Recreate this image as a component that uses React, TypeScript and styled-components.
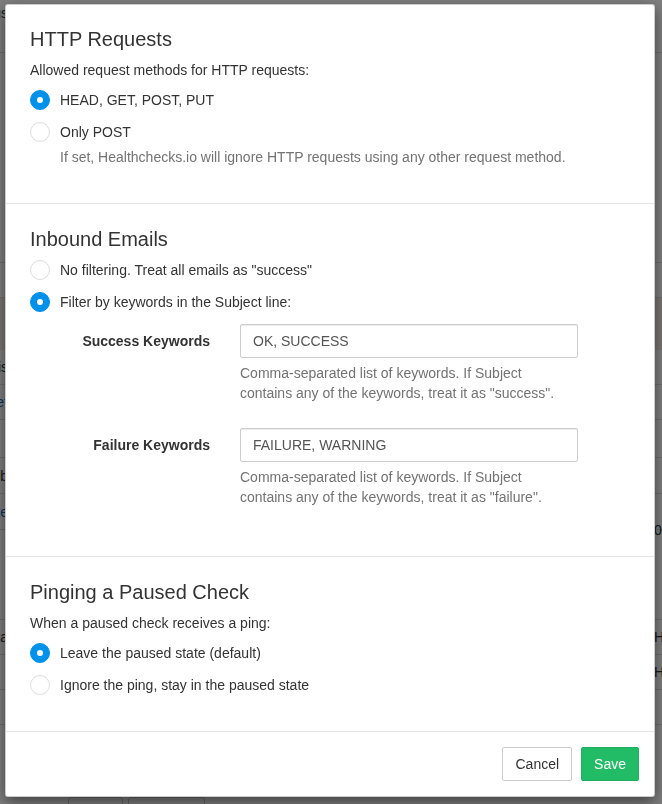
import styled, { createGlobalStyle } from "styled-components";

const GlobalStyle = createGlobalStyle`
  html, body {
    margin: 0;
    padding: 0;
  }
  body {
    font-family: "Liberation Sans", Arial, sans-serif;
    font-size: 14px;
    line-height: 20px;
    color: #333;
    background: #fff;
  }
  * {
    box-sizing: border-box;
  }
`;

/* ---------- page behind the dialog ---------- */

const _Page = styled.div`
  width: 662px;
  height: 804px;
  overflow: hidden;
  position: relative;
`;

const _BgRow = styled.div<{ $h: number; $line?: boolean; $tint?: boolean; $top?: boolean }>`
  height: ${({ $h }) => $h}px;
  display: flex;
  align-items: ${({ $top }) => ($top ? "flex-start" : "center")};
  padding-top: ${({ $top }) => ($top ? "3px" : "0")};
  justify-content: space-between;
  border-bottom: ${({ $line }) => ($line ? "1px solid #ddd" : "none")};
  background: ${({ $tint }) => ($tint ? "#f4ece8" : "transparent")};
`;

const _BgLeft = styled.div<{ $blue?: boolean }>`
  width: 8px;
  display: flex;
  justify-content: flex-end;
  white-space: nowrap;
  color: ${({ $blue }) => ($blue ? "#0a6ebd" : "#333")};
`;

const _BgRight = styled.div`
  width: 8px;
  white-space: nowrap;
  color: #333;
`;

const _BgButtons = styled.div`
  display: flex;
  gap: 5px;
  padding-left: 68px;
  align-items: flex-start;
  height: 100%;
`;

const _BgButton = styled.div<{ $w: number }>`
  width: ${({ $w }) => $w}px;
  height: 34px;
  border: 1px solid #ccc;
  border-radius: 3px;
  padding: 6px 12px;
  font-size: 14px;
`;

const _Backdrop = styled.div`
  position: fixed;
  inset: 0;
  background: rgba(0, 0, 0, 0.5);
`;

/* ---------- dialog ---------- */

const _Modal = styled.div`
  position: fixed;
  top: 4px;
  left: 5px;
  width: 650px;
  background: #fff;
  border: 1px solid rgba(0, 0, 0, 0.2);
  border-radius: 3px;
  box-shadow: 0 5px 15px rgba(0, 0, 0, 0.5);
`;

const _Section = styled.section`
  padding: 24px 24px 24px;
  border-top: 1px solid #e5e5e5;
  &:first-child {
    padding-top: 23px;
    border-top: none;
  }
`;

const _Title = styled.h2`
  margin: 0 0 10px;
  font-size: 20px;
  line-height: 22px;
  font-weight: 400;
  color: #333;
`;

const _Text = styled.p`
  margin: 0 0 10px;
`;

const _Option = styled.div`
  margin-bottom: 12px;
`;

const _OptionLine = styled.label`
  display: flex;
  align-items: center;
  gap: 10px;
  height: 20px;
  cursor: pointer;
`;

const _Radio = styled.span<{ $on: boolean }>`
  width: 20px;
  height: 20px;
  border-radius: 50%;
  flex: none;
  display: flex;
  align-items: center;
  justify-content: center;
  background: ${({ $on }) => ($on ? "#0091ea" : "#fff")};
  border: 1px solid ${({ $on }) => ($on ? "#0091ea" : "#ddd")};
  &::after {
    content: "";
    width: 6px;
    height: 6px;
    border-radius: 50%;
    background: #fff;
    display: ${({ $on }) => ($on ? "block" : "none")};
  }
`;

const _Help = styled.div<{ $indent?: boolean }>`
  margin-top: 5px;
  padding-left: ${({ $indent }) => ($indent ? "30px" : "0")};
  color: #737373;
`;

const _FormGroup = styled.div`
  display: grid;
  grid-template-columns: 180px 338px;
  column-gap: 30px;
  margin-bottom: 25px;
`;

const _Label = styled.label`
  text-align: right;
  font-weight: 700;
  padding-top: 7px;
`;

const _Input = styled.input`
  height: 34px;
  width: 100%;
  padding: 6px 12px;
  font: 14px "Liberation Sans", Arial, sans-serif;
  color: #555;
  border: 1px solid #ccc;
  border-radius: 2px;
  box-shadow: inset 0 1px 1px rgba(0, 0, 0, 0.075);
  outline: none;
`;

const _Footer = styled.div`
  display: flex;
  justify-content: flex-end;
  gap: 9px;
  padding: 15px;
  border-top: 1px solid #e5e5e5;
`;

const _Button = styled.button<{ $primary?: boolean }>`
  height: 34px;
  padding: 6px 12px;
  font: 14px/20px "Liberation Sans", Arial, sans-serif;
  border-radius: 2px;
  cursor: pointer;
  color: ${({ $primary }) => ($primary ? "#fff" : "#333")};
  background: ${({ $primary }) => ($primary ? "#22bc66" : "#fff")};
  border: 1px solid ${({ $primary }) => ($primary ? "#1fae5e" : "#ccc")};
`;

const RadioOption = ({
  on,
  label,
  help,
}: {
  on: boolean;
  label: string;
  help?: string;
}) => (
  <_Option>
    <_OptionLine>
      <_Radio $on={on} />
      {label}
    </_OptionLine>
    {help && <_Help $indent>{help}</_Help>}
  </_Option>
);

const KeywordField = ({
  label,
  value,
  kind,
}: {
  label: string;
  value: string;
  kind: string;
}) => (
  <_FormGroup>
    <_Label>{label}</_Label>
    <div>
      <_Input defaultValue={value} />
      <_Help>
        Comma-separated list of keywords. If Subject
        <br />
        contains any of the keywords, treat it as "{kind}".
      </_Help>
    </div>
  </_FormGroup>
);

type BgRowData = {
  h: number;
  line?: boolean;
  tint?: boolean;
  top?: boolean;
  left?: string;
  blue?: boolean;
  right?: string;
};

const bgRows: BgRowData[] = [
  { h: 53, line: true, top: true, left: "Status" },
  { h: 210, line: true },
  { h: 35, line: true },
  { h: 52, tint: true },
  { h: 35, line: true, left: "This" },
  { h: 35, line: true, left: "Ref", blue: true },
  { h: 38, line: true },
  { h: 36, line: true, left: "Job" },
  { h: 36, line: true, left: "Site", blue: true },
  { h: 0, right: "0:" },
  { h: 90, line: true },
  { h: 35, line: true, left: "Data", right: "He" },
  { h: 35, line: true, right: "He" },
  { h: 35, line: true },
  { h: 72 },
];

export default function App() {
  return (
    <>
      <GlobalStyle />
      <_Page>
        {bgRows.map((r, i) => (
          <_BgRow key={i} $h={r.h} $line={r.line} $tint={r.tint} $top={r.top}>
            <_BgLeft $blue={r.blue}>{r.left}</_BgLeft>
            <_BgRight>{r.right}</_BgRight>
          </_BgRow>
        ))}
        <_BgButtons>
          <_BgButton $w={55}>Copy</_BgButton>
          <_BgButton $w={77}>Check</_BgButton>
        </_BgButtons>
        <_Backdrop />
        <_Modal>
          <_Section>
            <_Title>HTTP Requests</_Title>
            <_Text>Allowed request methods for HTTP requests:</_Text>
            <RadioOption on label="HEAD, GET, POST, PUT" />
            <RadioOption
              on={false}
              label="Only POST"
              help="If set, Healthchecks.io will ignore HTTP requests using any other request method."
            />
          </_Section>
          <_Section>
            <_Title>Inbound Emails</_Title>
            <RadioOption on={false} label={'No filtering. Treat all emails as "success"'} />
            <RadioOption on label="Filter by keywords in the Subject line:" />
            <KeywordField label="Success Keywords" value="OK, SUCCESS" kind="success" />
            <KeywordField label="Failure Keywords" value="FAILURE, WARNING" kind="failure" />
          </_Section>
          <_Section>
            <_Title>Pinging a Paused Check</_Title>
            <_Text>When a paused check receives a ping:</_Text>
            <RadioOption on label="Leave the paused state (default)" />
            <RadioOption on={false} label="Ignore the ping, stay in the paused state" />
          </_Section>
          <_Footer>
            <_Button>Cancel</_Button>
            <_Button $primary>Save</_Button>
          </_Footer>
        </_Modal>
      </_Page>
    </>
  );
}
